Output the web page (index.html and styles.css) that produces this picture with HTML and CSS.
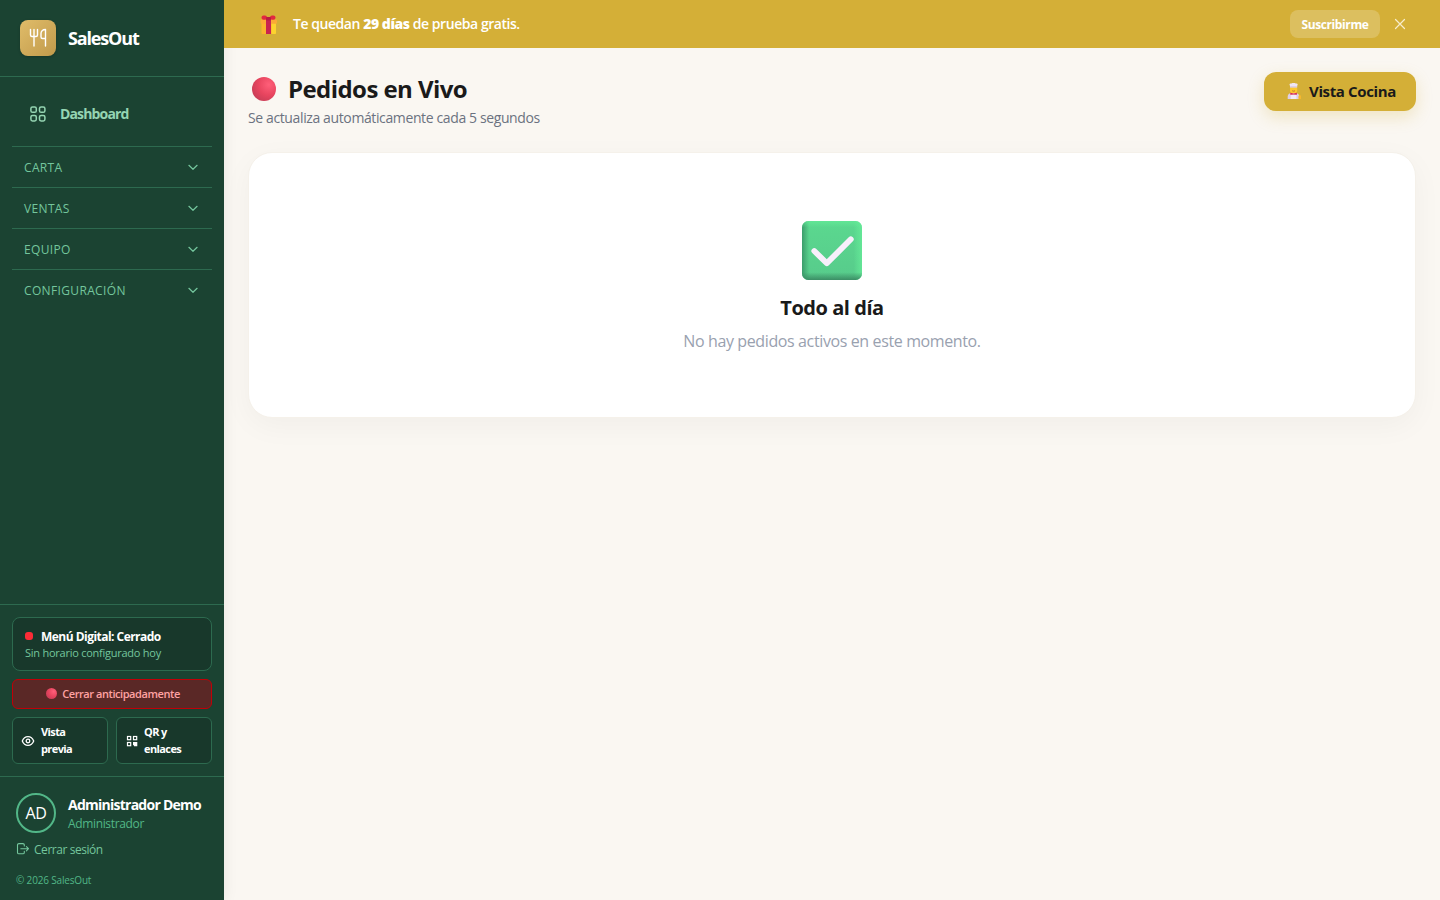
FILE: index.html
```html
<!DOCTYPE html>
<html lang="es">

<head>
    <meta charset="UTF-8">
    <meta name="viewport" content="width=device-width, initial-scale=1.0">
    <title>Pedidos en Vivo - SalesOut</title>
    <link rel="stylesheet" href="styles.css">
</head>

<body>
    <aside class="sidebar">
        <div class="brand">
            <div class="brand-logo">
                <svg width="20" height="20" viewBox="0 0 20 20" fill="none" stroke="#fff" stroke-width="1.4" stroke-linecap="round" stroke-linejoin="round">
                    <path d="M2.5 1.5v5.5a1.5 1.5 0 0 0 1.5 1.5h4a1.500 1.500 0 0 0 1.500-1.500V1.500M6 1.500v16.500M17.500 10.500h-3a1.500 1.500 0 0 1-1.500-1.500V5.500c0-2.300 1.500-4 4.500-4V18" />
                </svg>
            </div>
            <span class="brand-name">SalesOut</span>
        </div>

        <nav class="nav">
            <a class="nav-link" href="#">
                <svg width="16" height="16" viewBox="0 0 16 16" fill="none" stroke="currentColor" stroke-width="1.5">
                    <rect x=".9" y=".9" width="5.4" height="5.4" rx="1.6" />
                    <rect x="9.5" y=".9" width="5.4" height="5.4" rx="1.6" />
                    <rect x=".9" y="9.5" width="5.4" height="5.4" rx="1.6" />
                    <rect x="9.5" y="9.5" width="5.4" height="5.4" rx="1.6" />
                </svg>
                <span>Dashboard</span>
            </a>
            <button class="nav-group">
                <span>CARTA</span>
                <svg class="chevron" viewBox="0 0 14 14"><path d="M2.9 5.3l4.1 4 4.1-4" /></svg>
            </button>
            <button class="nav-group">
                <span>VENTAS</span>
                <svg class="chevron" viewBox="0 0 14 14"><path d="M2.9 5.3l4.1 4 4.1-4" /></svg>
            </button>
            <button class="nav-group">
                <span>EQUIPO</span>
                <svg class="chevron" viewBox="0 0 14 14"><path d="M2.9 5.3l4.1 4 4.1-4" /></svg>
            </button>
            <button class="nav-group">
                <span>CONFIGURACIÓN</span>
                <svg class="chevron" viewBox="0 0 14 14"><path d="M2.9 5.3l4.1 4 4.1-4" /></svg>
            </button>
        </nav>

        <div class="menu-status">
            <div class="status-card">
                <div class="status-title"><i class="dot"></i><span>Menú Digital: Cerrado</span></div>
                <div class="status-text">Sin horario configurado hoy</div>
            </div>
            <button class="close-button"><i class="ball ball-small"></i><span>Cerrar anticipadamente</span></button>
            <div class="status-links">
                <a class="status-link" href="#">
                    <svg width="14" height="14" viewBox="0 0 14 14" fill="none" stroke="currentColor" stroke-width="1.3">
                        <path d="M1.3 7C2.4 4.2 4.6 2.7 7 2.7S11.6 4.2 12.7 7C11.6 9.8 9.4 11.3 7 11.3S2.4 9.8 1.3 7z" />
                        <circle cx="7" cy="7" r="1.8" />
                    </svg>
                    <span>Vista previa</span>
                </a>
                <a class="status-link status-link-qr" href="#">
                    <svg width="14" height="14" viewBox="0 0 14 14" fill="none" stroke="currentColor" stroke-width="1.2">
                        <rect x="2.5" y="2.5" width="3.2" height="3.2" />
                        <rect x="8.500" y="2.5" width="3.2" height="3.2" />
                        <rect x="2.5" y="8.500" width="3.2" height="3.2" />
                        <path d="M8 8h4.3v4.3H9v-1H8z" fill="currentColor" stroke="none" />
                    </svg>
                    <span>QR y enlaces</span>
                </a>
            </div>
        </div>

        <div class="account">
            <div class="user">
                <div class="avatar">AD</div>
                <div>
                    <div class="user-name">Administrador Demo</div>
                    <div class="user-role">Administrador</div>
                </div>
            </div>
            <a class="logout" href="#">
                <svg width="14" height="14" viewBox="0 0 14 14" fill="none" stroke="currentColor" stroke-width="1.1" stroke-linecap="round" stroke-linejoin="round">
                    <path d="M8.300 4V3a1.400 1.400 0 0 0-1.400-1.400H2.900A1.400 1.400 0 0 0 1.500 3v7.400a1.400 1.400 0 0 0 1.400 1.400h4a1.400 1.400 0 0 0 1.400-1.400V9.200M4.800 6.700h7.600M10.400 4.600l2.100 2.100-2.100 2.100" />
                </svg>
                <span>Cerrar sesión</span>
            </a>
            <div class="copyright">© 2026 SalesOut</div>
        </div>
    </aside>

    <div class="content">
        <div class="trial-bar">
            <svg width="18" height="19" viewBox="0 0 18 19">
                <rect x="1.500" y="7" width="14.500" height="12" rx="1" fill="#f9b52d" />
                <rect x="11.500" y="8" width="4.500" height="11" rx="1" fill="#fdd32f" />
                <rect x=".5" y="4.500" width="16.500" height="4.200" rx="1" fill="#fba936" />
                <rect x="6" y="3" width="5" height="16" fill="#c92350" />
                <rect x="1.500" y=".5" width="5.500" height="4.300" rx="2" fill="#e22740" />
                <rect x="10" y=".5" width="5.500" height="4.300" rx="2" fill="#e22740" />
                <rect x="6" y="2" width="5" height="3.500" rx="1" fill="#b81c43" />
            </svg>
            <span class="trial-text">Te quedan <b>29 días</b> de prueba gratis.</span>
            <button class="subscribe">Suscribirme</button>
            <button class="dismiss">
                <svg width="12" height="12" viewBox="0 0 12 12"><path d="M1.500 1.500l9 9M10.500 1.500l-9 9" stroke="#f8edcc" stroke-width="1.200" stroke-linecap="round" /></svg>
            </button>
        </div>

        <main>
            <div class="page-header">
                <div>
                    <h1><i class="ball"></i><span>Pedidos en Vivo</span></h1>
                    <p class="subtitle">Se actualiza automáticamente cada 5 segundos</p>
                </div>
                <a class="kitchen-button" href="#">
                    <svg width="16" height="16" viewBox="0 0 16 16">
                        <path d="M1.700 16v-2.300C1.700 11 3.800 9.400 7.500 9.400s5.800 1.600 5.800 4.300V16z" fill="#ddcfe8" />
                        <path d="M12.600 16c-.5-2-.2-3.400.9-4.300l1.500 1V16z" fill="#f5b82e" />
                        <rect x="4" y="3.200" width="7.200" height="6.800" rx="2.600" fill="#fdc82f" />
                        <path d="M4 4.500V2.800C2.800 1.300 4 .1 5.400.5 6.400-.1 8.800-.1 9.800.5c1.400-.4 2.600.8 1.400 2.300v1.700z" fill="#efe5f3" />
                        <path d="M4.200 3.900H11" stroke="#c5b2cc" stroke-width=".7" />
                        <path d="M6.200 7.800q1.400.8 2.800 0" stroke="#a85b25" stroke-width=".7" fill="none" />
                        <path d="M4.800 16v-4h5.600v4z" fill="#f3eaf7" />
                        <path d="M4.300 9.800l3.300.8 3.300-.8v2l-3.300-.2-3.300.2z" fill="#dc2946" />
                    </svg>
                    <span>Vista Cocina</span>
                </a>
            </div>

            <section class="empty-state">
                <svg width="60" height="60" viewBox="0 0 60 60">
                    <defs>
                        <linearGradient id="base" x1="0" x2="0" y1="0" y2="1">
                            <stop offset="0" stop-color="#5bd88f" />
                            <stop offset="1" stop-color="#57cb8b" />
                        </linearGradient>
                        <linearGradient id="sides">
                            <stop offset="0" stop-color="#3c9d6c" />
                            <stop offset=".12" stop-color="#3c9d6c" stop-opacity="0" />
                            <stop offset=".86" stop-color="#68f49c" stop-opacity="0" />
                            <stop offset="1" stop-color="#68ee9a" stop-opacity=".7" />
                        </linearGradient>
                        <linearGradient id="edges" x1="0" x2="0" y1="0" y2="1">
                            <stop offset="0" stop-color="#66ef99" stop-opacity=".6" />
                            <stop offset=".11" stop-color="#66ef99" stop-opacity="0" />
                            <stop offset=".87" stop-color="#3b8e65" stop-opacity="0" />
                            <stop offset="1" stop-color="#3b8e65" />
                        </linearGradient>
                    </defs>
                    <rect y="1" width="60" height="59" rx="6.500" fill="url(#base)" />
                    <rect y="1" width="60" height="59" rx="6.500" fill="url(#sides)" />
                    <rect y="1" width="60" height="59" rx="6.500" fill="url(#edges)" />
                    <path d="M12.300 31l12.500 12.300 24-24" fill="none" stroke="#f8effb" stroke-width="5.800" stroke-linecap="round" stroke-linejoin="round" />
                </svg>
                <h2>Todo al día</h2>
                <p>No hay pedidos activos en este momento.</p>
            </section>
        </main>
    </div>
</body>

</html>
```
FILE: styles.css
```css
* {
    box-sizing: border-box;
}

body {
    display: flex;
    height: 100vh;
    margin: 0;
    overflow: hidden;
    font-family: "Segoe UI", "Open Sans", "Noto Sans", sans-serif;
    background-color: #faf7f2;
    color: #1a1a1a;
}

h1, h2, p {
    margin: 0;
}

a {
    color: inherit;
    text-decoration: none;
}

button {
    border: none;
    background: none;
    padding: 0;
    color: inherit;
    font-family: inherit;
    cursor: pointer;
}

svg {
    display: block;
    flex-shrink: 0;
}

.sidebar {
    display: flex;
    flex-direction: column;
    width: 224px;
    flex-shrink: 0;
    background-color: #1b4332;
    color: #74c69d;
    box-shadow: 0 0 14px rgba(0, 0, 0, 0.08);
}

.brand {
    display: flex;
    align-items: center;
    gap: 12px;
    height: 77px;
    padding: 0 20px;
    border-bottom: 1px solid #2d6a4f;
}

.brand-logo {
    display: flex;
    align-items: center;
    justify-content: center;
    width: 36px;
    height: 36px;
    border-radius: 8px;
    background: linear-gradient(135deg, #e0bc69, #c19a4b);
    box-shadow: 0 1px 3px rgba(0, 0, 0, 0.2);
}

.brand-name {
    color: #fff;
    font-size: 18px;
    font-weight: 700;
    letter-spacing: -1.15px;
}

.nav {
    flex: 1;
    padding: 16px 12px;
}

.nav-link {
    display: flex;
    align-items: center;
    gap: 14px;
    height: 41px;
    margin-bottom: 12px;
    padding-left: 18px;
    color: #95d5b2;
    font-size: 14px;
    font-weight: 700;
    letter-spacing: -0.85px;
}

.nav-group {
    display: flex;
    align-items: center;
    justify-content: space-between;
    width: 100%;
    height: 41px;
    padding: 0 12px;
    border-top: 1px solid #2d6a4f;
    font-size: 12px;
    letter-spacing: 0.35px;
}

.chevron {
    width: 14px;
    height: 14px;
    fill: none;
    stroke: currentColor;
    stroke-width: 1.2;
    stroke-linecap: round;
    stroke-linejoin: round;
}

.menu-status {
    display: flex;
    flex-direction: column;
    gap: 8px;
    padding: 12px;
    border-top: 1px solid #2d6a4f;
}

.status-card {
    height: 54px;
    padding: 9px 12px;
    border: 1px solid #2d6a4f;
    border-radius: 8px;
    background-color: #18382b;
}

.status-title {
    display: flex;
    align-items: center;
    gap: 8px;
    height: 18px;
    color: #fff;
    font-size: 12px;
    font-weight: 700;
    letter-spacing: -0.53px;
}

.dot {
    width: 8px;
    height: 8px;
    border-radius: 3px;
    background-color: #fb2c36;
}

.status-text {
    font-size: 11px;
    line-height: 15px;
    letter-spacing: -0.25px;
}

.close-button {
    display: flex;
    align-items: center;
    justify-content: center;
    gap: 5px;
    height: 30px;
    padding: 0 0 2px 2px;
    border: 1px solid #c10007;
    border-radius: 6px;
    background-color: #5a2826;
    color: #ffa2a2;
    font-size: 11px;
    font-weight: 600;
    letter-spacing: -0.43px;
}

.ball {
    width: 24px;
    height: 24px;
    border-radius: 50%;
    background: radial-gradient(circle at 70% 32%, #ff5f79, #e8455f 45%, #bf3b54 90%);
}

.ball-small {
    width: 11px;
    height: 11px;
}

.status-links {
    display: grid;
    grid-template-columns: 1fr 1fr;
    gap: 8px;
}

.status-link {
    display: flex;
    align-items: center;
    gap: 6px;
    height: 47px;
    padding: 0 20px 0 8px;
    border: 1px solid #2d6a4f;
    border-radius: 6px;
    background-color: #18382b;
    color: #fff;
    font-size: 11px;
    font-weight: 700;
    line-height: 16.5px;
    letter-spacing: -0.6px;
}

.status-link-qr {
    gap: 5px;
}

.account {
    height: 124px;
    padding: 16px;
    border-top: 1px solid #2d6a4f;
}

.user {
    display: flex;
    align-items: center;
    gap: 12px;
}

.avatar {
    display: flex;
    align-items: center;
    justify-content: center;
    width: 40px;
    height: 40px;
    border: 2px solid #52b788;
    border-radius: 50%;
    color: #fff;
    font-size: 16px;
    letter-spacing: -0.3px;
}

.user-name {
    color: #fff;
    font-size: 14px;
    font-weight: 700;
    line-height: 20px;
    letter-spacing: -0.75px;
    white-space: nowrap;
}

.user-role {
    color: #52b788;
    font-size: 12px;
    line-height: 17px;
    letter-spacing: -0.35px;
}

.logout {
    display: flex;
    align-items: center;
    gap: 4px;
    height: 18px;
    margin-top: 7px;
    font-size: 12px;
    letter-spacing: -0.45px;
}

.copyright {
    margin-top: 15px;
    color: #52b788;
    font-size: 10px;
    line-height: 15px;
    letter-spacing: -0.17px;
}

.content {
    flex: 1;
}

.trial-bar {
    display: flex;
    align-items: center;
    height: 48px;
    padding: 0 34px 0 36px;
    background-color: #d4af37;
    color: #fff;
}

.trial-text {
    flex: 1;
    margin-left: 15px;
    padding-bottom: 1px;
    font-size: 14px;
    font-weight: 600;
    letter-spacing: -0.45px;
}

.subscribe {
    width: 90px;
    height: 28px;
    border-radius: 8px;
    background-color: rgba(255, 255, 255, 0.2);
    font-size: 12px;
    font-weight: 700;
    letter-spacing: -0.4px;
}

.dismiss {
    margin-left: 14px;
}

main {
    padding: 24px;
}

.page-header {
    display: flex;
    justify-content: space-between;
    align-items: flex-start;
    margin-bottom: 24px;
}

h1 {
    display: flex;
    align-items: center;
    gap: 12px;
    height: 36px;
    padding: 0 0 2px 4px;
    font-size: 24px;
    font-weight: 700;
    letter-spacing: -0.57px;
}

h1 span {
    padding-bottom: 1px;
}

.subtitle {
    color: #6b7280;
    font-size: 14px;
    line-height: 20px;
    letter-spacing: -0.38px;
}

.kitchen-button {
    display: flex;
    align-items: center;
    justify-content: flex-end;
    gap: 7px;
    width: 152px;
    height: 39px;
    padding: 0 20px 1px 0;
    border-radius: 12px;
    background-color: #d4af37;
    box-shadow: 0 6px 16px rgba(212, 175, 55, 0.25);
    font-size: 15px;
    font-weight: 700;
    letter-spacing: -0.36px;
}

.empty-state {
    display: flex;
    flex-direction: column;
    align-items: center;
    height: 266px;
    padding-top: 67px;
    border: 1px solid #f5f1ea;
    border-radius: 24px;
    background-color: #fff;
    box-shadow: 0 8px 30px rgba(0, 0, 0, 0.04);
}

h2 {
    margin-top: 14px;
    font-size: 20px;
    font-weight: 700;
    line-height: 28px;
    letter-spacing: -0.45px;
}

.empty-state p {
    margin-top: 7px;
    color: #99a1af;
    font-size: 16px;
    line-height: 24px;
    letter-spacing: -0.38px;
}
```
